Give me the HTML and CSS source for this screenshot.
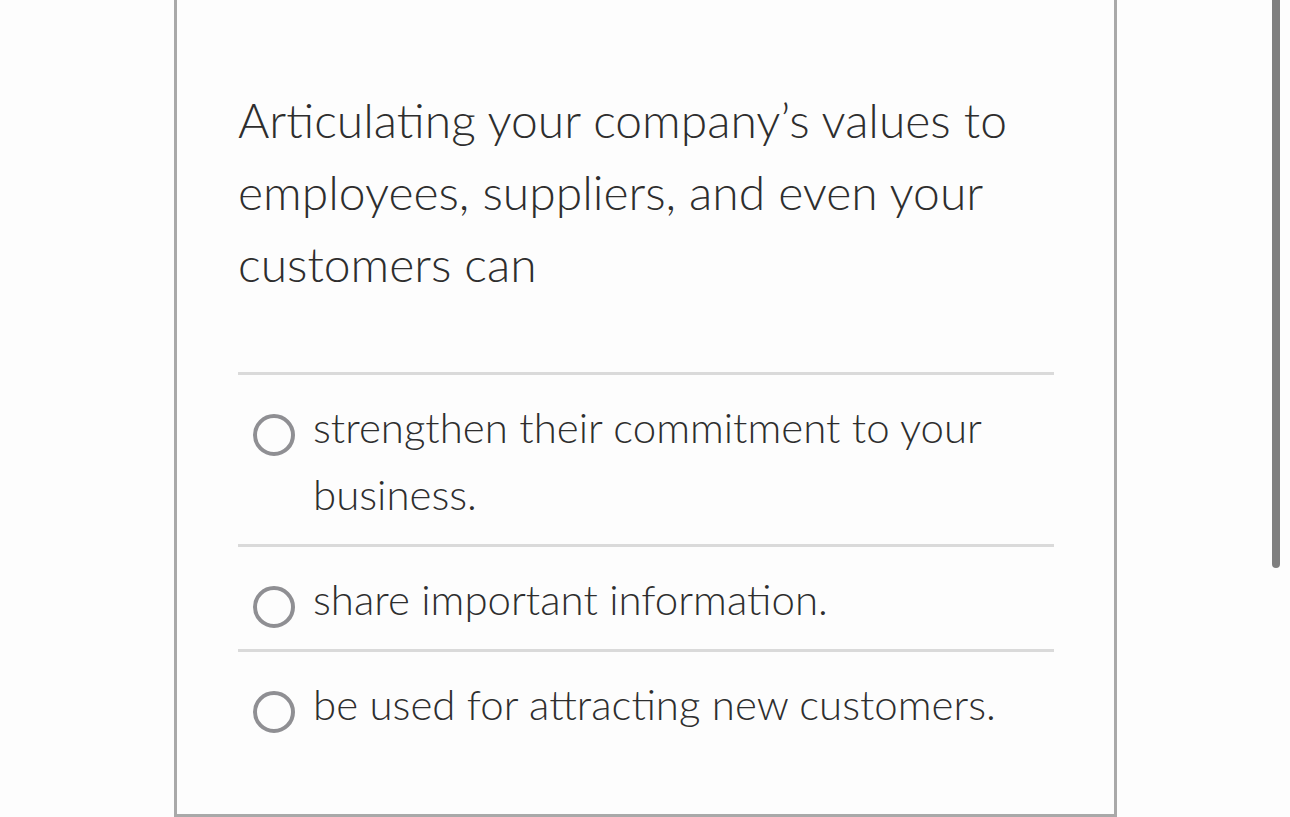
FILE: index.html
```html
<!DOCTYPE html>
<html>
<head>
<meta charset="utf-8">
<link rel="stylesheet" href="styles.css">
</head>
<body>
<div class="page">
  <div class="card">
    <p class="question">Articulating your company’s values to employees, suppliers, and even your customers can</p>
    <ul class="options">
      <li class="option"><span class="radio"></span><span class="label">strengthen their commitment to your business.</span></li>
      <li class="option"><span class="radio"></span><span class="label">share important information.</span></li>
      <li class="option"><span class="radio"></span><span class="label">be used for attracting new customers.</span></li>
    </ul>
  </div>
</div>
<div class="scrollbar"></div>
</body>
</html>
```
FILE: styles.css
```css
html, body {
  margin: 0;
  padding: 0;
  background: #fdfdfd;
  height: 817px;
  overflow: hidden;
}
.page {
  padding-left: 174px;
}
.card {
  border: 3px solid #a9a9a9;
  border-top: none;
  padding: 84px 60px 60px 61px;
  box-sizing: content-box;
  width: 816px;
  font-family: Lato, "Open Sans", sans-serif;
  font-weight: 300;
  color: #2e2e2e;
}
.question {
  margin: 0;
  font-size: 48px;
  line-height: 72px;
}
.options {
  list-style: none;
  margin: 72px 0 0 0;
  padding: 0;
}
.option {
  display: flex;
  align-items: flex-start;
  border-top: 3px solid #dadada;
  padding: 19px 0 16px 15px;
  font-size: 42px;
  line-height: 67px;
}
.radio {
  flex: none;
  width: 34px;
  height: 34px;
  border: 4px solid #8f8f93;
  border-radius: 50%;
  margin-top: 20px;
  margin-right: 18px;
}
.label {
  flex: 1;
}
.scrollbar {
  position: absolute;
  left: 1272px;
  top: 0;
  width: 8px;
  height: 568px;
  background: #7f7f7f;
  border-radius: 0 0 4px 4px;
}
```
